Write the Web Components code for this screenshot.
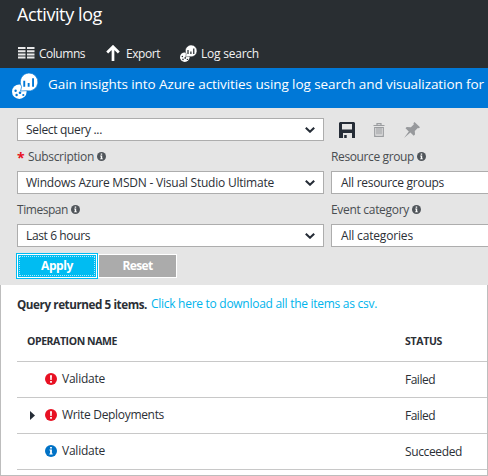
<!DOCTYPE html>
<html lang="en">
<head>
<meta charset="utf-8">
<title>Activity log</title>
<style>
html, body { margin: 0; height: 100%; overflow: hidden; }
body { font: 12px/16px "Open Sans", "Noto Sans", sans-serif; color: #2b2f36; background: #fff; }
</style>
</head>
<body>
<activity-log></activity-log>
<script>
const define = (name, html, setup) => customElements.define(name, class extends HTMLElement {
  connectedCallback() {
    if (this.shadowRoot) return;
    this.attachShadow({ mode: 'open' }).innerHTML = typeof html === 'function' ? html(this) : html;
    if (setup) setup(this);
  }
});

/* Text run that tracks its letters to a given width. */
define('fit-text', '<style>:host{display:block;white-space:pre;flex:none}span{display:inline-block}</style><span><slot></slot></span>', el => {
  const w = +el.getAttribute('w'), span = el.shadowRoot.querySelector('span');
  const natural = span.getBoundingClientRect().width;
  span.style.letterSpacing = ((w - natural) / el.textContent.length) + 'px';
  el.style.width = w + 'px';
});

const icons = {
  columns: ['0 0 17 12', '<path fill="#e9e9ea" d="M0 0h7.5v2H0zM9 0h7.5v2H9zM0 3.2h7.5v2H0zM9 3.2h7.5v2H9zM0 6.4h7.5v2H0zM9 6.4h7.5v2H9zM0 9.6h7.5v2H0zM9 9.6h7.5v2H9z"/>'],
  export: ['0 0 14 16', '<path d="M7 1.5V16M1.2 7.5 7 1.7l5.800 5.800" fill="none" stroke="#fff" stroke-width="2.700"/>'],
  logs: ['0 0 26 26', '<circle cx="7.300" cy="18.700" r="7.300" fill="#fff"/><g fill="var(--bg)"><circle cx="3.600" cy="17.700" r="1.200"/><circle cx="4.600" cy="22" r="1.200"/><circle cx="8" cy="19.800" r="1.300"/><circle cx="11.300" cy="22" r="1.100"/></g><path d="M16.900 0a9 9 0 1 1-2.300 17.700L8.600 18l1-4.300A9 9 0 0 1 16.900 0z" fill="#fff" stroke="var(--bg)" stroke-width=".7"/><path fill="var(--bg)" d="M11.300 7.700h1.900v6h-1.900zM15.700 10h1.900v3.700h-1.900zM20.100 5.300h1.900v8.400h-1.900z"/>'],
  save: ['0 0 16 16', '<path fill="#252c36" fill-rule="evenodd" d="M1 0h14l1 1v15h-3v-5H4v5H0V1zM3 2v5.500h10V2zM5.200 13h2.500v3H5.200z"/>'],
  trash: ['0 0 12 14', '<path d="M.5 2.500h11M4 2V.6h4V2M1.700 4v9.300h8.600V4M4 5v6.500M6 5v6.500M8 5v6.500M1.700 4.500h8.600" fill="none" stroke="#9b9da0" stroke-width="1.200"/>'],
  pin: ['0 0 16 16', '<path fill="#97999c" d="m10.500 0 5.500 5.300-1.200 1-1-.3-3 3 .2 3.500-1.300 1.200-3.300-3.200L0 16l4.800-6.600L1.500 6.200l1.200-1.300 4.200.3 3-3-.5-1z"/>'],
  info: ['0 0 9 9', '<circle cx="4.500" cy="4.500" r="4.500" fill="#50555a"/><path fill="#fff" d="M3.700 1.500h1.500v1.300H3.700zM3.200 3.600h2v2.800h.7v.9H3.100v-.9h.7V4.400h-.6z"/>'],
  error: ['0 0 12 12', '<circle cx="6" cy="6" r="6" fill="#e81123"/><path fill="#fff" d="M5 2.300h2L6.700 7H5.300zM5.100 8h1.800v1.700H5.100z"/>'],
  ok: ['0 0 12 12', '<circle cx="6" cy="6" r="6" fill="#0072c6"/><path fill="#fff" d="M5.100 2h1.800v1.600H5.100zM4.500 4.600h2.400v4h.8v1H4.400v-1h.7V5.600h-.6z"/>'],
  chevron: ['0 0 10 6', '<path d="M.8.8 5 4.700 9.200.8" fill="none" stroke="#252c36" stroke-width="2.100"/>'],
  expand: ['0 0 5 9', '<path d="M0 0l5 4.500L0 9z" fill="#252c36"/>']
};
define('ui-icon', el => {
  const [box, art] = icons[el.getAttribute('name')];
  const [, , w, h] = box.split(' ');
  return `<style>:host{display:block;flex:none}svg{display:block}</style><svg width="${el.getAttribute('size') || w}" height="${el.getAttribute('size') || h}" viewBox="${box}">${art}</svg>`;
});

define('tool-item', '<style>:host{display:flex;align-items:center;height:18px;color:#f2f2f2}::slotted(fit-text){padding-top:2px}</style><slot></slot>');

define('app-header', `<style>
:host{display:block;height:68px;background:#292e32;--bg:#292e32;color:#fff}
.title{font-size:18px;line-height:24px;padding:2px 0 0 17px;height:43px;box-sizing:border-box}
.tools{display:grid;grid-template-columns:88px 75px auto;padding:1px 0 0 18px}
tool-item:nth-child(1){gap:4px}tool-item:nth-child(2){gap:6px}tool-item:nth-child(3){gap:4px}
tool-item:nth-child(3) ui-icon{margin-left:-1px}
</style>
<div class="title"><fit-text w="85">Activity log</fit-text></div>
<div class="tools">
<tool-item><ui-icon name="columns"></ui-icon><fit-text w="46">Columns</fit-text></tool-item>
<tool-item><ui-icon name="export"></ui-icon><fit-text w="34">Export</fit-text></tool-item>
<tool-item><ui-icon name="logs" size="17"></ui-icon><fit-text w="58">Log search</fit-text></tool-item>
</div>`);

define('insight-banner', `<style>
:host{display:flex;align-items:flex-start;height:40px;background:#0078d7;--bg:#0078d7;color:#fff;padding-left:12px;gap:10px;font-size:13.500px;line-height:20px;box-sizing:border-box}
ui-icon{margin-top:5px}fit-text{margin-top:6px}
</style><ui-icon name="logs" size="26"></ui-icon><fit-text w="436">Gain insights into Azure activities using log search and visualization for</fit-text>`);

define('select-box', `<style>
:host{display:flex;align-items:center;justify-content:space-between;box-sizing:border-box;height:23px;border:1px solid #adadad;background:#fff;padding:0 8px 0 8px}
</style><slot></slot><ui-icon name="chevron"></ui-icon>`);

define('field-label', `<style>
:host{display:flex;align-items:center;height:30px;gap:3px;color:#494d51}
::slotted(fit-text){padding-top:2px}
</style><slot name="mark"></slot><slot></slot><ui-icon name="info"></ui-icon>`);

define('action-button', `<style>
:host{display:flex;align-items:center;justify-content:center;box-sizing:border-box;width:79px;height:24px;margin:1px 0;border:1px solid #fff;background:#ababab;color:#fff;font-weight:700}
:host([primary]){width:82px;height:26px;margin:0;border-color:#00bcf2;background:#00bcf2;outline:1px solid #fff;outline-offset:-2px;position:relative}
:host([primary])::after{content:"";position:absolute;inset:2px;border:1px dotted #a9e8fb}
</style><slot></slot>`);

define('filter-panel', `<style>
:host{display:block;box-sizing:border-box;height:177px;background:#e5e5e5;padding:10px 0 0 17px;overflow:hidden}
.grid{display:grid;grid-template-columns:307px 307px;column-gap:7px;grid-template-rows:23px 30px 23px 30px 23px}
.grid select-box:nth-of-type(odd){padding-left:8px}
.grid select-box.right{padding-left:9px}
.actions{display:flex;align-items:center;padding-left:8px}
.actions ui-icon:nth-child(2){margin-left:18px}.actions ui-icon:nth-child(3){margin-left:19px}
.star{font:700 14px/18px "Open Sans",sans-serif;color:#e81123;height:15px;width:8px}
.buttons{display:flex;margin:6px 0 0 -1px}
</style>
<div class="grid">
<select-box><fit-text w="76">Select query ...</fit-text></select-box>
<div class="actions"><ui-icon name="save"></ui-icon><ui-icon name="trash"></ui-icon><ui-icon name="pin"></ui-icon></div>
<field-label><span class="star" slot="mark">*</span><fit-text w="66">Subscription</fit-text></field-label>
<field-label><fit-text w="83">Resource group</fit-text></field-label>
<select-box><fit-text w="248">Windows Azure MSDN - Visual Studio Ultimate</fit-text></select-box>
<select-box class="right"><fit-text w="103">All resource groups</fit-text></select-box>
<field-label><fit-text w="51">Timespan</fit-text></field-label>
<field-label><fit-text w="78">Event category</fit-text></field-label>
<select-box><fit-text w="64">Last 6 hours</fit-text></select-box>
<select-box class="right"><fit-text w="72">All categories</fit-text></select-box>
</div>
<div class="buttons"><action-button primary><fit-text w="32">Apply</fit-text></action-button><action-button><fit-text w="30">Reset</fit-text></action-button></div>`);

define('log-row', `<style>
:host{display:grid;grid-template-columns:28px 17px 343px auto;align-items:center;box-sizing:border-box;height:36px;border-bottom:1px solid #c8c8c8;padding-bottom:1px}
.st{padding-top:1px}
.exp{padding-left:13px}
</style><div class="exp"><slot name="expand"></slot></div><slot name="icon"></slot><slot></slot><div class="st"><slot name="status"></slot></div>`);

define('log-results', `<style>
:host{display:block;box-sizing:border-box;height:191px;border:1px solid #bdbdbd;border-top:0;padding-left:16px;background:#fff}
.summary{display:flex;gap:4px;padding-top:11px;height:27px}
b{font-weight:700;font-size:11.700px}a{color:#00b4ec}
.head{display:grid;grid-template-columns:378px auto;padding:10px 0 0 10px;height:39px;box-sizing:border-box;border-bottom:1px solid #c8c8c8;font-size:10.500px;font-weight:700}
</style>
<div class="summary"><b><fit-text w="130">Query returned 5 items.</fit-text></b><a><fit-text w="226">Click here to download all the items as csv.</fit-text></a></div>
<div class="head"><fit-text w="90">OPERATION NAME</fit-text><fit-text w="37">STATUS</fit-text></div>
<log-row><ui-icon slot="icon" name="error"></ui-icon><fit-text w="43">Validate</fit-text><fit-text slot="status" w="30">Failed</fit-text></log-row>
<log-row><ui-icon slot="expand" name="expand"></ui-icon><ui-icon slot="icon" name="error"></ui-icon><fit-text w="102">Write Deployments</fit-text><fit-text slot="status" w="30">Failed</fit-text></log-row>
<log-row><ui-icon slot="icon" name="ok"></ui-icon><fit-text w="43">Validate</fit-text><fit-text slot="status" w="57">Succeeded</fit-text></log-row>`);

define('activity-log', `<style>:host{display:block;width:488px;height:476px;overflow:hidden}</style>
<app-header></app-header><insight-banner></insight-banner><filter-panel></filter-panel><log-results></log-results>`);
</script>
</body>
</html>
